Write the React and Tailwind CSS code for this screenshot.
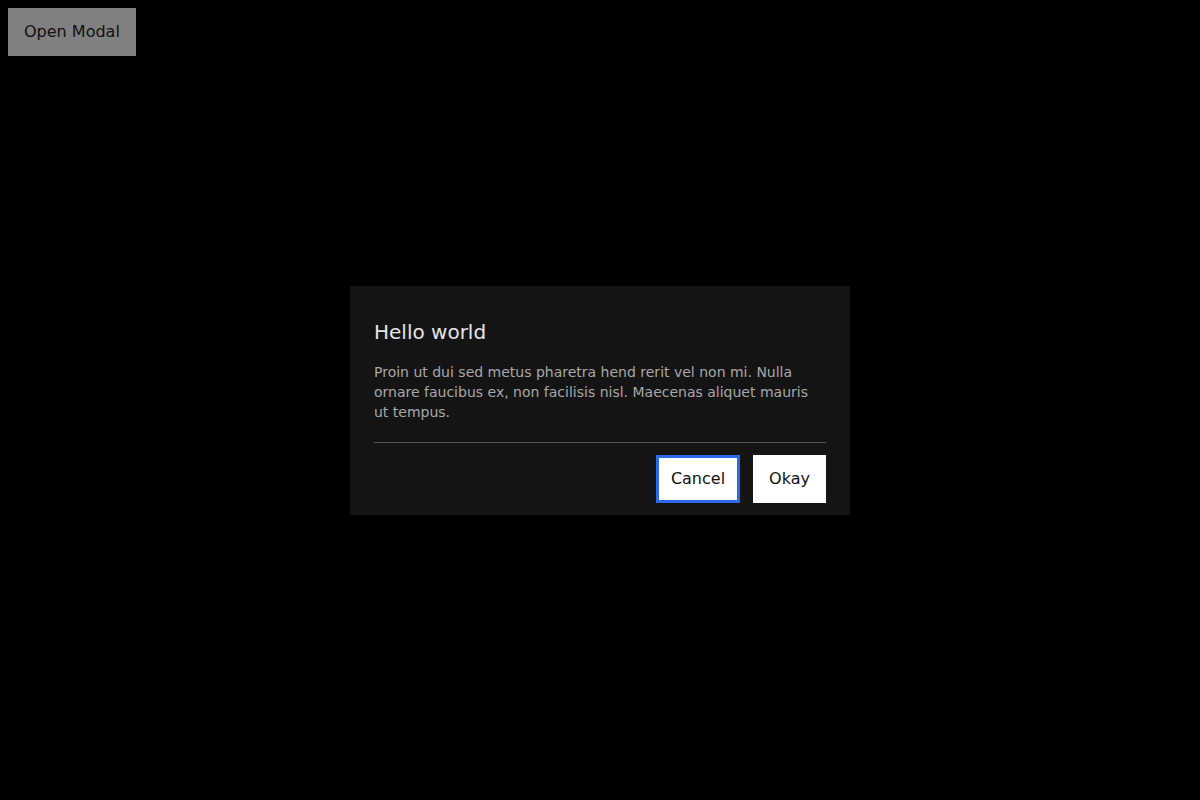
export default function App() {
  return (
    <div className="relative min-h-[800px] w-full bg-black font-['DejaVu_Sans',sans-serif]">
      <div className="p-2">
        <button className="bg-[#808080] px-4 py-3 text-base leading-6 text-[#111]">Open Modal</button>
      </div>

      <div className="absolute inset-0 flex items-center justify-center">
        <div className="w-[500px] bg-[#141414] px-6 pt-8 pb-3">
          <h2 className="text-xl leading-7 text-[#e5e5e5]">Hello world</h2>
          <p className="mt-4 text-sm leading-5 text-[#a8a8a8]">
            Proin ut dui sed metus pharetra hend rerit vel non mi. Nulla ornare faucibus ex, non facilisis nisl. Maecenas aliquet mauris ut tempus.
          </p>
          <div className="mt-5 h-px bg-[#555]" />
          <div className="mt-3 flex justify-end gap-[13px]">
            <button className="h-12 w-[84px] bg-white text-base text-[#111] outline-3 -outline-offset-3 outline-[#2a6ae8]">Cancel</button>
            <button className="h-12 w-[73px] bg-white text-base text-[#111]">Okay</button>
          </div>
        </div>
      </div>
    </div>
  );
}
